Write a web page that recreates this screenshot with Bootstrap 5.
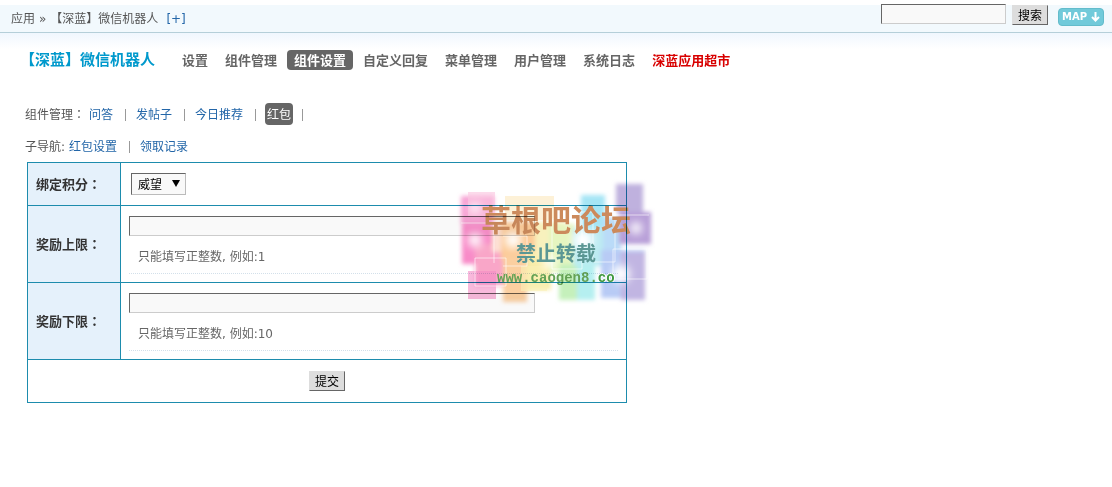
<!DOCTYPE html>
<html lang="zh-CN">
<head>
<meta charset="utf-8">
<meta name="viewport" content="width=device-width, initial-scale=1">
<title>【深蓝】微信机器人</title>
<link href="https://cdn.jsdelivr.net/npm/bootstrap@5.3.0/dist/css/bootstrap.min.css" rel="stylesheet">
<style>
body{font:12px/20px "DejaVu Sans","Noto Sans CJK SC",sans-serif;color:#555;background:#fff}
a{color:#2366a8;text-decoration:none}
.topbar{margin-top:5px;height:28px;padding:0 8px 0 11px;background:#f2f9fd;border-bottom:1px solid #b5cfd9}
.glow{height:16px;background:linear-gradient(#f0f7fe,#fff)}
.raised,.sunken,.pick{border-radius:0;font-size:12px;line-height:18px;color:#000}
.sunken{background:#f9f9f9;border:1px solid;border-color:#666 #ccc #ccc #666;height:20px;padding:0 4px}
.raised{background:#ddd;border:1px solid;border-color:#ddd #666 #666 #ddd;height:20px;width:36px;padding:1px 0 0}
.search-form{gap:6px;margin-right:10px}
.search-box{width:125px;margin-bottom:2px}
.map-link{width:46px;height:18px;border-radius:4px;border:1px solid #63bccb;background:#71cada;color:#fff;font:bold 10px/16px "DejaVu Sans",sans-serif}
.head-title{font-size:15px;font-weight:700;color:#0099cc;line-height:20px;margin:0 20px 0 0}
.main-nav{column-gap:3px}
.main-nav a{font-size:13px;line-height:18px;font-weight:700;color:#666;padding:2px 7px 0;border-radius:4px}
.main-nav a.active{background:#666;color:#fff}
.main-nav a.hot{color:#d80000}
.title-row{padding-left:20px;margin-top:1px}
.colon{font-family:"Noto Sans CJK TC",sans-serif;line-height:1}
.line-row{padding-left:25px;height:22px;line-height:20px}
.line-row>*{padding-top:2px}
.line-row i{width:1px;height:12px;background:#999;margin:2px 10px 0 12px;padding:0}
.line-row .chip{background:#666;color:#fff;border-radius:4px;padding:2px 2px 0;margin:0 -3px 0 -1px}
.first-line{margin-top:33px}
.line-row>span{margin-right:4px}
.second-line{margin-top:10px}
.form-area{margin:5px 0 0 27px}
.form-grid{width:600px;max-width:calc(100% - 27px);border-collapse:collapse}
.form-grid th,.form-grid td{border:1px solid #1d8cad;padding:10px 8px}
.form-grid th{width:93px;background:#e5f1fb;color:#333;font-size:13px;white-space:nowrap;padding:2px 0 0 8px}
.form-grid td.entry{padding-bottom:8px}
.form-grid td.actions{padding:11px 8px}
.actions .raised{display:block;margin:0 auto}
.form-grid .field{width:406px;max-width:100%;display:block}
.hint{padding:11px 0 0 9px;height:38px;color:#666;border-bottom:1px dotted #d3e0ea}
.pick{appearance:none;height:22px;width:55px;padding:1px 6px 0;border:1px solid;border-color:#666 #bbb #bbb #666;background:#f9f9f9;display:block}
.pick-wrap{width:55px;margin-left:2px}
.pick-wrap svg{right:6px;top:7px}
.stamp{left:428px;top:16px;width:200px;height:130px;mix-blend-mode:multiply;pointer-events:none}
</style>
</head>
<body>
<header>
  <div class="topbar d-flex align-items-center">
    <nav class="d-flex flex-grow-1" aria-label="位置">
      <span>应用</span><span class="mx-1">»</span><span>【深蓝】微信机器人</span><a class="ms-2" href="#">[+]</a>
    </nav>
    <form class="search-form d-flex align-items-center mb-2" role="search">
      <input class="sunken search-box" type="text" aria-label="搜索">
      <button class="raised" type="button">搜索</button>
    </form>
    <a class="map-link d-flex align-items-center justify-content-center mb-1" href="#">MAP
      <svg class="ms-1" width="9" height="10" viewBox="0 0 9 10" fill="none" stroke="#fff" stroke-width="2"><path d="M4.500 0v8M1 5l3.500 3.500L8 5"/></svg></a>
  </div>
  <div class="glow"></div>
</header>
<main>
  <div class="title-row d-flex flex-wrap align-items-center">
    <h1 class="head-title">【深蓝】微信机器人</h1>
    <nav class="main-nav d-flex flex-wrap">
      <a href="#">设置</a><a href="#">组件管理</a><a class="active" href="#">组件设置</a><a href="#">自定义回复</a><a href="#">菜单管理</a><a href="#">用户管理</a><a href="#">系统日志</a><a class="hot" href="#">深蓝应用超市</a>
    </nav>
  </div>
  <nav class="line-row first-line d-flex align-items-center">
    <span>组件管理<span class="colon" lang="zh-TW">：</span></span><a href="#">问答</a><i></i><a href="#">发帖子</a><i></i><a href="#">今日推荐</a><i></i><a class="chip" href="#">红包</a><i></i>
  </nav>
  <nav class="line-row second-line d-flex align-items-center">
    <span>子导航:</span><a href="#">红包设置</a><i></i><a href="#">领取记录</a>
  </nav>
  <form class="form-area position-relative">
    <table class="form-grid">
      <tbody>
      <tr><th scope="row"><label for="credit">绑定积分<span class="colon" lang="zh-TW">：</span></label></th>
        <td><div class="pick-wrap position-relative"><select class="pick" id="credit"><option>威望</option></select>
          <svg class="position-absolute" width="8" height="7" viewBox="0 0 8 7"><path d="M0 0h8L4 7z"/></svg></div></td></tr>
      <tr><th scope="row"><label for="upper">奖励上限<span class="colon" lang="zh-TW">：</span></label></th>
        <td class="entry"><input class="sunken field" id="upper" type="text"><div class="hint">只能填写正整数, 例如:1</div></td></tr>
      <tr><th scope="row"><label for="lower">奖励下限<span class="colon" lang="zh-TW">：</span></label></th>
        <td class="entry"><input class="sunken field" id="lower" type="text"><div class="hint">只能填写正整数, 例如:10</div></td></tr>
      <tr><td class="actions" colspan="2"><button class="raised" type="button">提交</button></td></tr>
      </tbody>
    </table>
    <svg class="stamp position-absolute" viewBox="0 0 200 130">
      <defs><filter id="soft" x="-20%" y="-20%" width="140%" height="140%"><feGaussianBlur stdDeviation="2"/></filter>
        <filter id="glowspot" x="-100%" y="-100%" width="300%" height="300%"><feGaussianBlur stdDeviation="4"/></filter></defs>
      <g filter="url(#soft)">
        <rect x="6" y="18" width="33" height="28" fill="#f7a3d4"/>
        <rect x="7" y="46" width="30" height="40" fill="#f88bc8"/>
        <rect x="20" y="66" width="28" height="42" fill="#f9a6c8"/>
        <rect x="37" y="44" width="14" height="30" fill="#fde0d4"/>
        <rect x="46" y="44" width="38" height="38" fill="#fccb98"/>
        <rect x="48" y="78" width="24" height="46" fill="#fbcfa0"/>
        <rect x="72" y="74" width="24" height="38" fill="#f8edaa"/>
        <rect x="80" y="44" width="30" height="34" fill="#f8f1bd"/>
        <rect x="94" y="46" width="26" height="48" fill="#e6f5c0"/>
        <rect x="104" y="86" width="34" height="36" fill="#c5f0bb"/>
        <rect x="126" y="17" width="24" height="40" fill="#a5e5f5"/>
        <rect x="118" y="50" width="34" height="38" fill="#bcebf2"/>
        <rect x="122" y="86" width="18" height="36" fill="#b5eff0"/>
        <rect x="148" y="40" width="18" height="50" fill="#badbf8"/>
        <rect x="146" y="72" width="44" height="48" fill="#b8cbf5"/>
        <rect x="161" y="6" width="27" height="28" fill="#bfb1de"/>
        <rect x="164" y="34" width="32" height="32" fill="#b89fd8"/>
        <rect x="166" y="74" width="24" height="48" fill="#c1b5e2"/>
      </g>
      <g fill-opacity=".6">
        <rect x="13" y="14" width="27" height="24" fill="#fac4df"/>
        <rect x="13" y="93" width="28" height="28" fill="#f38cc5"/>
        <rect x="50" y="18" width="49" height="24" fill="#fce8bd"/>
        <rect x="66" y="88" width="26" height="25" fill="#faf0b5"/>
      </g>
      <g fill="none" stroke="#fff" stroke-opacity=".6"><path d="M6 45h33v40M20 80h31v28H20zM48 58h24v30H48M97 41h30v50H97zM118 34h20v50h22V34M158 37h36M158 71h34v30h-34z"/></g>
      <g fill="#fff" filter="url(#glowspot)"><circle cx="20" cy="62" r="7"/><circle cx="58" cy="62" r="8"/><circle cx="128" cy="62" r="10"/><circle cx="181" cy="50" r="6"/><circle cx="166" cy="96" r="9"/><circle cx="20" cy="30" r="5"/><circle cx="94" cy="84" r="6"/></g>
      <g font-family="'Noto Sans CJK SC',sans-serif" font-weight="700">
        <text x="26" y="53" font-size="30" fill="#cc8a5c">草根吧论坛</text>
        <text x="61" y="83" font-size="20" fill="#5b9794">禁止转载</text>
      </g>
      <text x="42" y="104" font-family="'Liberation Mono',monospace" font-size="14" font-weight="700" fill="#64a255">www.caogen8.<tspan fill="#409840" stroke="#fff" stroke-width="2" paint-order="stroke">co</tspan></text>
    </svg>
  </form>
</main>
<script src="https://cdn.jsdelivr.net/npm/bootstrap@5.3.0/dist/js/bootstrap.bundle.min.js"></script>
</body>
</html>
